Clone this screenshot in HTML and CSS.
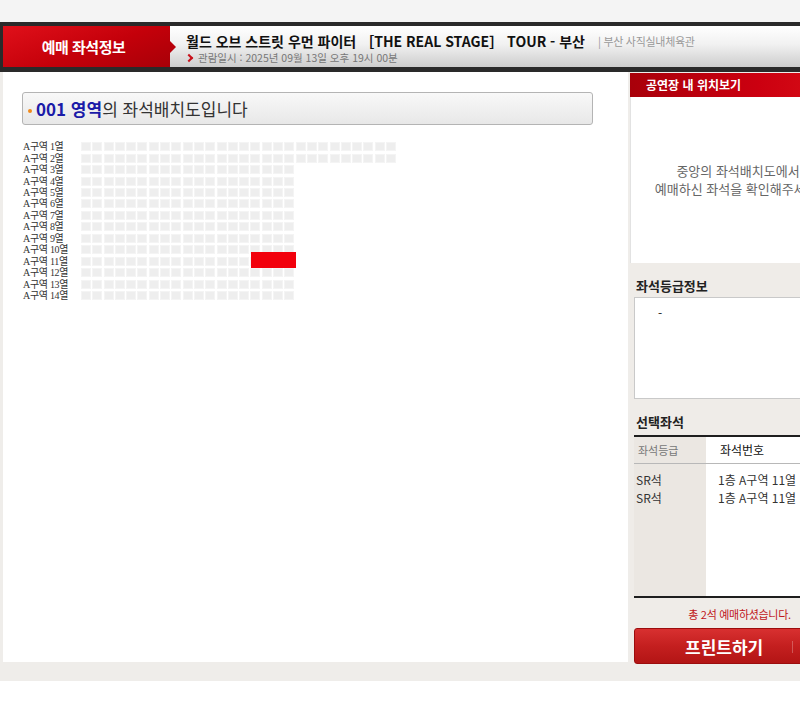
FILE: index.html
```html
<!DOCTYPE html>
<html lang="ko">
<head>
  <meta charset="UTF-8" />
  <meta name="viewport" content="width=device-width, initial-scale=1.0"/>
  <title>예매 좌석정보</title>
  <link rel="stylesheet" href="styles.css">
</head>
<body>
  <div class="topStrip"></div>

  <div class="wrap">
    <!-- 상단 바 -->
    <div class="hd">
      <div class="tab">예매 좌석정보</div>
      <div class="info">
        <div class="titleLine">
          <span class="showTitle">월드 오브 스트릿 우먼 파이터 ［THE REAL STAGE］ TOUR - 부산</span>
          <span class="venue">| 부산 사직실내체육관</span>
        </div>
        <div class="dateLine"><span class="chev"></span>관람일시 : 2025년 09월 13일 오후 19시 00분</div>
      </div>
    </div>

    <div class="body">
      <!-- 좌석배치도 -->
      <div class="main">
        <div class="titleBox">
          <span class="dot"></span><b>001 영역</b>의 좌석배치도입니다
        </div>
        <div class="seatmap" id="seatmap">
          <div class="picked"></div>
        </div>
      </div>

      <!-- 오른쪽 -->
      <div class="side">
        <div class="sideHd">공연장 내 위치보기</div>
        <div class="sideView">
          중앙의 좌석배치도에서<br>
          예매하신 좌석을 확인해주세요.
        </div>
        <div class="sideInfo">
          <h3>좌석등급정보</h3>
          <div class="gradeBox">-</div>

          <h3 class="selTitle">선택좌석</h3>
          <div class="selTable">
            <div class="selHead">
              <div class="c1">좌석등급</div>
              <div class="c2">좌석번호</div>
            </div>
            <div class="selBody">
              <div class="c1">SR석<br>SR석</div>
              <div class="c2">1층 A구역 11열 18번<br>1층 A구역 11열 19번</div>
            </div>
          </div>
          <p class="total">총 2석 예매하셨습니다.</p>
          <button class="printBtn">프린트하기</button>
        </div>
      </div>
    </div>
  </div>

  <script>
    const seatmap = document.getElementById('seatmap');

    for (let r = 1; r <= 14; r++) {
      const row = document.createElement('div');
      row.className = 'row';

      const label = document.createElement('span');
      label.className = 'label';
      label.textContent = 'A구역 ' + r + '열';
      row.appendChild(label);

      const count = r <= 2 ? 28 : 19;
      for (let i = 0; i < count; i++) {
        const seat = document.createElement('span');
        seat.className = 'seat';
        row.appendChild(seat);
      }
      seatmap.appendChild(row);
    }
  </script>
</body>
</html>
```

FILE: styles.css
```css
body {
  margin: 0;
  background: #fff;
  font-family: "Noto Sans CJK KR", "Noto Sans", sans-serif;
  color: #222;
  overflow: hidden;
  width: 800px;
  height: 716px;
}
.topStrip {
  height: 22px;
  background: #f4f4f4;
}
.wrap {
  width: 850px;
  background: #efedea;
  padding-bottom: 19px;
}

/* 상단 바 */
.hd {
  display: flex;
  height: 41px;
  border-top: 4px solid #2a2a2a;
  border-bottom: 5px solid #2a2a2a;
  border-left: 3px solid #2a2a2a;
  background: linear-gradient(#ffffff, #f1f1f1 45%, #cdcdcd);
}
.tab {
  position: relative;
  width: 167px;
  background: linear-gradient(160deg, #e0101a, #c4000a 55%, #a80008);
  color: #fff;
  font-weight: bold;
  font-size: 15px;
  letter-spacing: -0.5px;
  line-height: 41px;
  text-align: center;
  padding-right: 6px;
  box-sizing: border-box;
}
.tab::after {
  content: "";
  position: absolute;
  right: -6px;
  top: 15px;
  border-top: 6px solid transparent;
  border-bottom: 6px solid transparent;
  border-left: 6px solid #b8000a;
}
.info {
  padding: 5px 0 0 16px;
}
.titleLine {
  display: flex;
  align-items: center;
  height: 20px;
  white-space: nowrap;
}
.showTitle {
  font-size: 14px;
  font-weight: bold;
  color: #111;
}
.venue {
  margin-left: 13px;
  font-size: 11px;
  color: #999;
  letter-spacing: -0.3px;
}
.dateLine {
  display: flex;
  align-items: center;
  height: 13px;
  font-size: 10.5px;
  color: #777;
  white-space: nowrap;
}
.chev {
  width: 4px;
  height: 4px;
  border-top: 2px solid #c8101a;
  border-right: 2px solid #c8101a;
  transform: rotate(45deg);
  margin: 0 6px 0 0;
}

.body {
  display: flex;
  align-items: flex-start;
}

/* 좌석배치도 */
.main {
  width: 625px;
  height: 590px;
  margin-left: 3px;
  background: #fff;
  padding: 20px 0 0 20px;
  box-sizing: border-box;
}
.titleBox {
  width: 571px;
  height: 33px;
  margin-left: -1px;
  box-sizing: border-box;
  border: 1px solid #b4b4b4;
  border-radius: 3px;
  background: linear-gradient(#f8f8f8, #e8e8e8);
  display: flex;
  align-items: center;
  padding-left: 5px;
  font-size: 17px;
  color: #333;
  white-space: nowrap;
}
.titleBox b {
  color: #1b1ba8;
}
.dot {
  width: 4px;
  height: 4px;
  border-radius: 50%;
  background: #f08a1c;
  margin: 4px 4px 0 0;
}
.seatmap {
  position: relative;
  margin-top: 16px;
}
.row {
  display: flex;
  align-items: center;
  height: 11.46px;
}
.label {
  width: 58px;
  font-family: "Liberation Serif", "Noto Sans CJK KR", serif;
  font-size: 10px;
  line-height: 11px;
  color: #333;
  letter-spacing: -0.3px;
  white-space: nowrap;
}
.seat {
  width: 10px;
  height: 9px;
  margin-right: 1.3px;
  background: #eeeeee;
  box-shadow: inset 0 0 0 1px #f4f4f4;
}
.picked {
  position: absolute;
  left: 228px;
  top: 111px;
  width: 45px;
  height: 16px;
  background: #f2000c;
  z-index: 1;
}

/* 오른쪽 */
.side {
  width: 215px;
  margin-left: 2px;
}
.sideHd {
  height: 24px;
  margin-top: 1px;
  background: linear-gradient(90deg, #a8000a, #cc0010 60%, #d81018);
  color: #fff;
  font-size: 12px;
  font-weight: bold;
  line-height: 24px;
  padding-left: 16px;
}
.sideView {
  height: 166px;
  box-sizing: border-box;
  background: #fff;
  border-left: 1px solid #e2e2e2;
  padding-top: 65px;
  text-align: center;
  font-size: 13px;
  line-height: 18px;
  color: #666;
}
.sideInfo {
  height: 399px;
  box-sizing: border-box;
  background: #efece8;
  padding: 13px 0 0 4px;
}
.sideInfo h3 {
  margin: 0;
  font-size: 13px;
  line-height: 19px;
  color: #222;
  padding-left: 2px;
}
.gradeBox {
  margin-top: 2px;
  height: 102px;
  box-sizing: border-box;
  border: 1px solid #c9c9c9;
  background: #fff;
  padding: 6px 0 0 23px;
  font-size: 12px;
}
.selTitle {
  margin-top: 13px !important;
}
.selTable {
  margin-top: 4px;
  border-top: 2px solid #1e1e1e;
  border-bottom: 2px solid #1e1e1e;
}
.selHead {
  display: flex;
  height: 26px;
  border-bottom: 1px solid #b8b8b8;
  line-height: 26px;
}
.selBody {
  display: flex;
  height: 132px;
  line-height: 18px;
}
.c1 {
  width: 72px;
  background: #ebe7e2;
  font-size: 12px;
  color: #333;
  padding-left: 2px;
  box-sizing: border-box;
}
.c2 {
  flex: 1;
  background: #fff;
  font-size: 12px;
  color: #333;
  padding-left: 12px;
  white-space: nowrap;
}
.selHead .c1 {
  font-size: 11px;
  color: #777;
  padding-left: 4px;
}
.selHead .c2 {
  color: #111;
  padding-left: 14px;
}
.selBody .c1,
.selBody .c2 {
  padding-top: 7px;
}
.total {
  margin: 9px 0 0;
  text-align: center;
  font-size: 11px;
  line-height: 14px;
  color: #c0151b;
  letter-spacing: -0.3px;
}
.printBtn {
  position: relative;
  display: block;
  width: 100%;
  height: 36px;
  margin-top: 7px;
  border: 1px solid #9c0d0d;
  border-radius: 3px;
  background: linear-gradient(#d83030, #c41f1f 50%, #b31515);
  color: #fff;
  font-family: inherit;
  font-size: 17px;
  font-weight: bold;
  text-align: left;
  padding-left: 50px;
  cursor: pointer;
}
.printBtn::after {
  content: "";
  position: absolute;
  left: 157px;
  top: 12px;
  width: 1px;
  height: 12px;
  background: rgba(255, 255, 255, 0.25);
}
```
